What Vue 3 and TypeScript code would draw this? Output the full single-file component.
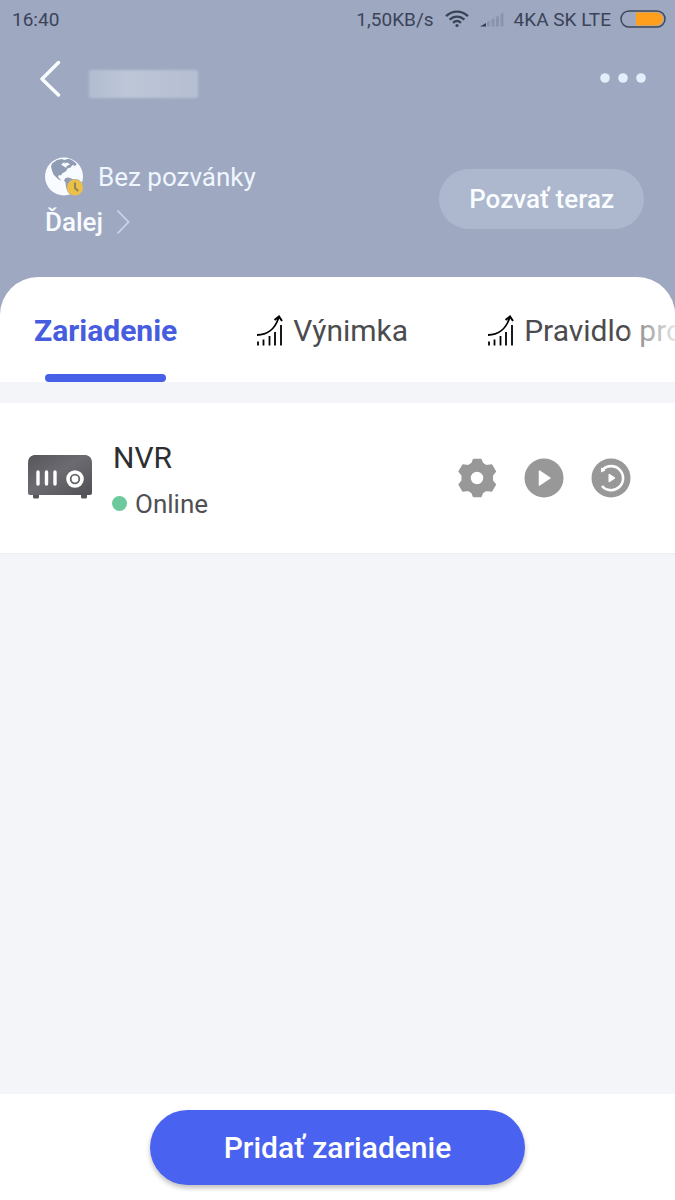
<script setup lang="ts">
import { ref } from 'vue'

interface Tab {
  id: string
  label: string
  chart: boolean
}

const tabs: Tab[] = [
  { id: 'device', label: 'Zariadenie', chart: false },
  { id: 'exception', label: 'Výnimka', chart: true },
  { id: 'rule', label: 'Pravidlo pro', chart: true },
]
const active = ref('device')
</script>

<template>
  <div class="app">
    <header class="top">
      <div class="status">
        <span class="time">16:40</span>
        <span>1,50KB/s</span>
        <svg class="wifi" width="24" height="18" viewBox="0 0 24 18" fill="none" stroke="#3a4357" stroke-width="2.3">
          <path d="M1 6.2C7.5.1 16.5.1 23 6.2" />
          <path d="M4.6 9.6C9 5.500 15 5.500 19.400 9.600" />
          <path d="M8 12.800C10.500 10.500 13.500 10.500 16 12.800" />
          <circle cx="12" cy="15.500" r="1.600" fill="#3a4357" stroke="none" />
        </svg>
        <svg class="signal" width="24" height="16" viewBox="0 0 24 16">
          <path d="M0 15.500 6 12v3.500z" fill="#343d51" />
          <g fill="#8a94ab">
            <path d="M7 11.300 10 9.600v5.900H7zM11.500 8.700l3-1.700v8.500h-3zM16 6.100l3-1.700v11.100h-3zM20.500 3.500 23.500 1.500v14h-3z" />
          </g>
        </svg>
        <span>4KA SK LTE</span>
        <svg class="battery" width="46" height="18" viewBox="0 0 46 18">
          <path d="M16 2.500h20.500a6.500 6.500 0 0 1 0 13H16z" fill="#ff9f1c" />
          <rect x="1" y="1" width="44" height="16" rx="8" fill="none" stroke="#3d465a" stroke-width="1.500" />
        </svg>
      </div>

      <div class="titlebar">
        <button class="icon-btn" aria-label="Späť">
          <svg width="24" height="38" viewBox="0 0 24 38" fill="none" stroke="#fafdff" stroke-width="3.400" stroke-linecap="round" stroke-linejoin="round">
            <path d="M20.500 3.500 4 20 20.500 36" />
          </svg>
        </button>
        <div class="hidden-name"></div>
        <button class="icon-btn more" aria-label="Viac">
          <svg width="46" height="12" viewBox="0 0 46 12" fill="#e4edfb">
            <circle cx="5" cy="6" r="4.800" />
            <circle cx="23" cy="6" r="4.800" />
            <circle cx="41" cy="6" r="4.800" />
          </svg>
        </button>
      </div>

      <section class="invite">
        <div class="invite-info">
          <div class="invite-state">
            <svg width="40" height="40" viewBox="0 0 40 40">
              <circle cx="19" cy="19.500" r="19" fill="#f8fbff" />
              <g fill="#909cb3">
                <path d="M7 6.500 12 3l5-1 2 1 5-1.200 4 2 3.500 3-1 2.200-3-1-2 2.500-3 1-1.500 2.800-3.500 2-1.800 2.200-1.700-.5-1 2 1.500 1.500 2 2.500-3.500-2-4.500-4.500-1.500-4L6 9.500z" />
                <path d="M20.500 21l2.500-.6 3.500 1.100 2.500 1.500-5.500 5-1 6-1.500-4-.5-4.500-1.500-2z" />
              </g>
              <path d="M16 7.500l3.500-2.500v1.500l3-1 2.500 2-3 1.200-1 2-2.500-1.500z" fill="#f8fbff" />
              <circle cx="30" cy="30.500" r="8.500" fill="#9ea8c1" />
              <circle cx="30" cy="30.500" r="8" fill="#ebbf48" />
              <path d="M30 25.500v5.500l3.200 3" fill="none" stroke="#8f8657" stroke-width="2" />
            </svg>
            <span>Bez pozvánky</span>
          </div>
          <a class="next" href="#next">
            Ďalej
            <svg width="14" height="26" viewBox="0 0 14 26" fill="none" stroke="#cbd4e6" stroke-width="1.800">
              <path d="M1.500 1.500 12.500 13 1.500 24.500" />
            </svg>
          </a>
        </div>
        <button class="invite-btn">Pozvať teraz</button>
      </section>

      <nav class="tabs">
        <button
          v-for="t in tabs"
          :key="t.id"
          class="tab"
          :class="{ active: active === t.id }"
          @click="active = t.id"
        >
          <svg v-if="t.chart" width="28" height="32" viewBox="0 0 28 32" fill="none" stroke="#000">
            <path d="M1 20C11 20 19 14 22.500 3" stroke-width="1.800" />
            <path d="M18.500 5 23 1.500 26 6" stroke-width="2" />
            <path d="M2 26.500v4M7.500 24.500v6M13.500 21v9.500M19 17V30.500M25 10V30.500" stroke-width="1.800" />
          </svg>
          <span>{{ t.label }}</span>
        </button>
      </nav>
    </header>

    <main class="content">
      <article class="device">
        <svg class="nvr" width="64" height="46" viewBox="0 0 64 46">
          <defs>
            <linearGradient id="body" x1="0" y1="0" x2="1" y2="1">
              <stop offset="0" stop-color="#55555a" />
              <stop offset=".45" stop-color="#6b6b71" />
              <stop offset="1" stop-color="#505055" />
            </linearGradient>
          </defs>
          <path d="M5 39h6v3q0 1.500-1.500 1.500h-3Q5 43.500 5 42zM53 39h6v3q0 1.500-1.500 1.500h-3Q53 43.500 53 42z" fill="#55555a" />
          <path d="M6 0h52q6 1 6 8v30q0 2-2 2H2q-2 0-2-2V8q0-7 6-8z" fill="url(#body)" />
          <path d="M10 17v12M18.500 17v12M27 17v12" stroke="#fff" stroke-width="3.400" stroke-linecap="round" />
          <circle cx="47" cy="24" r="8.800" fill="#fff" />
          <circle cx="47" cy="24" r="4.300" fill="#fff" stroke="#65656a" stroke-width="1.800" />
        </svg>
        <div class="device-info">
          <h2>NVR</h2>
          <p><i class="dot"></i>Online</p>
        </div>
        <div class="actions">
          <button class="icon-btn" aria-label="Nastavenia">
            <svg width="40" height="40" viewBox="0 0 40 40">
              <path fill="#989898" fill-rule="evenodd" stroke="#989898" stroke-width="1.500" stroke-linejoin="round" d="M16.500 1.500h7.500l1.500 4 4 2.300 5-.8 3.800 6.500-3 3.800v5.400l3 3.800-3.800 6.500-5-.8-4 2.300-1.500 4h-7.500l-1.500-4-4-2.300-5 .8-3.800-6.500 3-3.800v-5.400l-3-3.800L6 7l5 .8 4-2.300zM20 13a7 7 0 1 0 0 14 7 7 0 0 0 0-14z" />
            </svg>
          </button>
          <button class="icon-btn" aria-label="Prehrať">
            <svg width="40" height="40" viewBox="0 0 40 40">
              <circle cx="20" cy="20" r="19.500" fill="#989898" />
              <path d="M15.500 13 26 20 15.500 27z" fill="#fff" stroke="#fff" stroke-width="1.500" stroke-linejoin="round" />
            </svg>
          </button>
          <button class="icon-btn" aria-label="Záznam">
            <svg width="40" height="40" viewBox="0 0 40 40">
              <circle cx="20" cy="20" r="19.500" fill="#989898" />
              <path d="M11.500 11.800A12 12 0 1 1 11 28" fill="none" stroke="#fff" stroke-width="2.600" />
              <path d="M10 9.500v5l4.500-2z" fill="#fff" />
              <path d="M18 16 24 20 18 24z" fill="#fff" stroke="#fff" stroke-linejoin="round" />
            </svg>
          </button>
        </div>
      </article>
    </main>

    <footer class="footer">
      <button class="add">Pridať zariadenie</button>
    </footer>
  </div>
</template>

<style>
body {
  margin: 0;
}
</style>

<style scoped>
.app {
  display: flex;
  flex-direction: column;
  min-height: 100vh;
  background: #f4f5f8;
  font-family: Roboto, "Noto Sans", sans-serif;
  color: #2e2e30;
}
button {
  font: inherit;
  border: 0;
  padding: 0;
  background: none;
  cursor: pointer;
}
svg {
  display: block;
  flex: none;
}
.top {
  background: #9ea8c1;
}
.status {
  display: flex;
  align-items: center;
  height: 38px;
  padding: 0 9px 0 12px;
  font-size: 19px;
  color: #3b4458;
}
.time {
  margin-right: auto;
}
.wifi {
  margin-left: 11px;
}
.signal {
  margin: 0 10px 0 11px;
}
.battery {
  margin-left: 9px;
}
.titlebar {
  display: flex;
  align-items: center;
  height: 80px;
  padding: 0 29px 0 38px;
}
.icon-btn {
  display: block;
}
.hidden-name {
  width: 109px;
  height: 28px;
  margin: 12px 0 0 27px;
  background: linear-gradient(90deg, #b1bccf, #bdc7d8 35%, #b8c2d4 70%, #b5bfd2);
  filter: blur(1px);
}
.more {
  margin-left: auto;
}
.invite {
  display: flex;
  align-items: center;
  justify-content: space-between;
  padding: 36px 31px 33px 45px;
}
.invite-state {
  display: flex;
  align-items: center;
  gap: 13px;
  height: 46px;
  font-size: 26px;
  color: #f0f6ff;
}
.next {
  display: flex;
  align-items: center;
  gap: 13px;
  height: 44px;
  font-size: 26px;
  font-weight: 500;
  color: #f8fbff;
  text-decoration: none;
}
.invite-btn {
  height: 60px;
  padding: 0 30px;
  border-radius: 30px;
  background: #adb7cd;
  color: #fafdff;
  font-size: 26px;
  font-weight: 500;
}
.tabs {
  position: relative;
  display: flex;
  align-items: stretch;
  gap: 79px;
  height: 105px;
  padding-left: 34px;
  overflow: hidden;
  border-radius: 38px 38px 0 0;
  background: #fff;
}
.tabs::after {
  content: "";
  position: absolute;
  inset: 0 0 0 auto;
  width: 46px;
  background: linear-gradient(90deg, #fff4, #fffd);
}
.tab {
  position: relative;
  display: flex;
  flex: none;
  align-items: center;
  gap: 9px;
  padding-top: 2px;
  font-size: 30px;
  color: #4c4c4e;
  white-space: nowrap;
}
.tab.active {
  font-weight: 700;
  color: #465de0;
}
.tab.active::after {
  content: "";
  position: absolute;
  bottom: 0;
  left: 11px;
  right: 11px;
  height: 8px;
  border-radius: 4px;
  background: #4660e8;
}
.content {
  flex: 1;
  padding-top: 21px;
}
.device {
  display: flex;
  align-items: center;
  height: 150px;
  padding: 0 44px 0 28px;
  background: #fff;
  border-bottom: 1px solid #efeff2;
}
.device-info {
  margin-left: 21px;
  padding-top: 5px;
}
.device h2 {
  margin: 0;
  font-size: 30px;
  font-weight: 400;
  line-height: 46px;
}
.device p {
  display: flex;
  align-items: center;
  gap: 8px;
  margin: 0 0 0 -1px;
  font-size: 26px;
  line-height: 46px;
  color: #505054;
}
.dot {
  width: 15px;
  height: 15px;
  border-radius: 50%;
  background: #6bc99b;
}
.actions {
  display: flex;
  gap: 27px;
  margin-left: auto;
}
.footer {
  display: flex;
  justify-content: center;
  padding: 16px 0 15px;
  background: #fff;
}
.add {
  width: 375px;
  height: 75px;
  border-radius: 38px;
  background: #4a62f0;
  box-shadow: 0 3px 5px #00000040;
  color: #fff;
  font-size: 30px;
  font-weight: 500;
}
</style>
